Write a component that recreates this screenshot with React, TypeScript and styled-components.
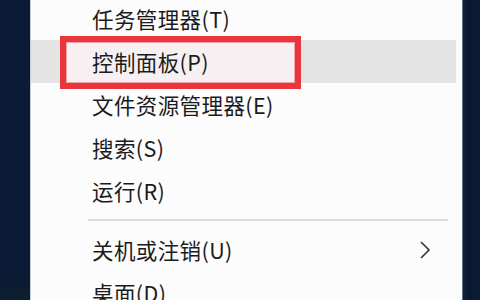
import React from 'react';
import styled, { createGlobalStyle } from 'styled-components';

const Global = createGlobalStyle`
  html, body {
    margin: 0;
    padding: 0;
    background: #0a1830;
  }
`;

const Screen = styled.div`
  width: 480px;
  height: 300px;
  overflow: hidden;
  background: #0a1830;
  display: flex;
`;

const LeftPane = styled.div`
  width: 30px;
  flex-shrink: 0;
  background: linear-gradient(180deg, #0b1a35 0%, #0b1a35 92%, #0d1f2e 100%);
`;

const RightPane = styled.div`
  flex: 1;
  background: linear-gradient(90deg, #10223c 0%, #0a1830 40%, #0c1b34 100%);
  border-left: 1px solid #5f6f85;
`;

const Menu = styled.div`
  width: 431px;
  flex-shrink: 0;
  background: #fcfcfc;
  border-left: 1px solid #c9ced6;
  margin-top: -3px;
  display: flex;
  flex-direction: column;
  font-family: "Noto Sans CJK SC", "Noto Sans", sans-serif;
`;

const Item = styled.div<{ $active?: boolean }>`
  position: relative;
  height: 43px;
  flex-shrink: 0;
  display: flex;
  align-items: center;
  padding-left: 61px;
  padding-right: 24px;
  margin-right: 6px;
  font-size: 21.5px;
  letter-spacing: 0.4px;
  color: #1b1b1b;
  background: ${(p) => (p.$active ? '#e4e4e4' : 'transparent')};
`;

const Label = styled.span`
  flex: 1;
  white-space: nowrap;
`;

const Highlight = styled.div`
  position: absolute;
  left: 29px;
  top: -4px;
  width: 241px;
  height: 53px;
  box-sizing: border-box;
  border: 6px solid #e8363c;
  background: #f7f0f3;
  box-shadow: inset 0 0 0 1px #f3a0a4;
  z-index: 0;
`;

const HighlightText = styled.span`
  position: relative;
  z-index: 1;
`;

const Separator = styled.div`
  height: 16px;
  flex-shrink: 0;
  display: flex;
  align-items: center;
  padding-left: 57px;
  padding-right: 14px;
  &::after {
    content: '';
    flex: 1;
    height: 2px;
    background: #dadada;
  }
`;

const Chevron = () => (
  <svg width="14" height="22" viewBox="0 0 14 22" fill="none">
    <path d="M3 3 L11 11 L3 19" stroke="#333" strokeWidth="1.6" />
  </svg>
);

const App = () => {
  return (
    <>
      <Global />
      <Screen>
        <LeftPane />
        <Menu>
          <Item>
            <Label>任务管理器(T)</Label>
          </Item>
          <Item $active>
            <Highlight />
            <HighlightText>控制面板(P)</HighlightText>
          </Item>
          <Item>
            <Label>文件资源管理器(E)</Label>
          </Item>
          <Item>
            <Label>搜索(S)</Label>
          </Item>
          <Item>
            <Label>运行(R)</Label>
          </Item>
          <Separator />
          <Item>
            <Label>关机或注销(U)</Label>
            <Chevron />
          </Item>
          <Item>
            <Label>桌面(D)</Label>
          </Item>
        </Menu>
        <RightPane />
      </Screen>
    </>
  );
};

export default App;
